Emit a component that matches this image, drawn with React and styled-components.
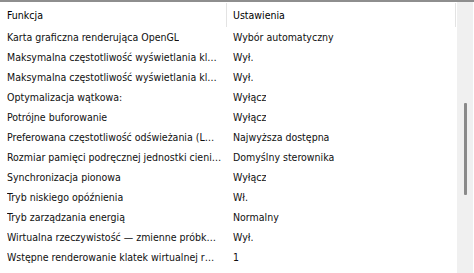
import React from "react";
import styled, { createGlobalStyle } from "styled-components";

const GlobalStyle = createGlobalStyle`
  html, body {
    margin: 0;
    padding: 0;
    background: #ffffff;
  }
  body {
    font-family: "DejaVu Sans Condensed", "DejaVu Sans", sans-serif;
    font-stretch: condensed;
    font-size: 10.5px;
    color: #000000;
  }
`;

const settings = [
  ["Karta graficzna renderująca OpenGL", "Wybór automatyczny"],
  ["Maksymalna częstotliwość wyświetlania kl…", "Wył."],
  ["Maksymalna częstotliwość wyświetlania kl…", "Wył."],
  ["Optymalizacja wątkowa:", "Wyłącz"],
  ["Potrójne buforowanie", "Wyłącz"],
  ["Preferowana częstotliwość odświeżania (L…", "Najwyższa dostępna"],
  ["Rozmiar pamięci podręcznej jednostki cieni…", "Domyślny sterownika"],
  ["Synchronizacja pionowa", "Wyłącz"],
  ["Tryb niskiego opóźnienia", "Wł."],
  ["Tryb zarządzania energią", "Normalny"],
  ["Wirtualna rzeczywistość — zmienne próbk…", "Wył."],
  ["Wstępne renderowanie klatek wirtualnej r…", "1"],
  ["Wyostrzanie obrazu", "Wył."],
];

const Frame = styled.div`
  width: 474px;
  height: 273px;
  box-sizing: border-box;
  border-top: 2px solid #8e8e8e;
  display: flex;
  overflow: hidden;
`;

const List = styled.div`
  width: 457px;
  display: grid;
  grid-template-columns: 227px 1fr;
  grid-auto-rows: 20px;
  grid-template-rows: 25px;
  align-content: start;
`;

const HeaderCell = styled.div`
  position: relative;
  display: flex;
  align-items: center;
  padding-left: ${(p) => p.$indent}px;
  color: #000000;

  &::after {
    content: "";
    position: absolute;
    right: ${(p) => (p.$last ? 1 : 0)}px;
    top: 1px;
    bottom: 0;
    width: 1px;
    background: #e3e3e3;
  }
`;

const Cell = styled.div`
  display: flex;
  align-items: center;
  min-width: 0;
  padding-left: ${(p) => p.$indent}px;
  padding-right: 4px;
  white-space: nowrap;
  color: #101010;
`;

const CellText = styled.span`
  display: block;
  min-width: 0;
  max-width: 100%;
  overflow: hidden;
  text-overflow: ellipsis;
`;

const ScrollTrack = styled.div`
  width: 16px;
  margin-right: 1px;
  background: #f0f0f0;
  display: flex;
  justify-content: center;
  padding-top: 101px;
  padding-left: 1px;
  box-sizing: border-box;
`;

const ScrollThumb = styled.div`
  width: 3px;
  height: 92px;
  border-radius: 1px;
  background: #8a8a8a;
`;

export default function App() {
  return (
    <>
      <GlobalStyle />
      <Frame>
        <List>
          <HeaderCell $indent={7}>Funkcja</HeaderCell>
          <HeaderCell $indent={6} $last>
            Ustawienia
          </HeaderCell>
          {settings.map(([name, value], i) => (
            <React.Fragment key={i}>
              <Cell $indent={7}>
                <CellText>{name}</CellText>
              </Cell>
              <Cell $indent={6}>
                <CellText>{value}</CellText>
              </Cell>
            </React.Fragment>
          ))}
        </List>
        <ScrollTrack>
          <ScrollThumb />
        </ScrollTrack>
      </Frame>
    </>
  );
}
